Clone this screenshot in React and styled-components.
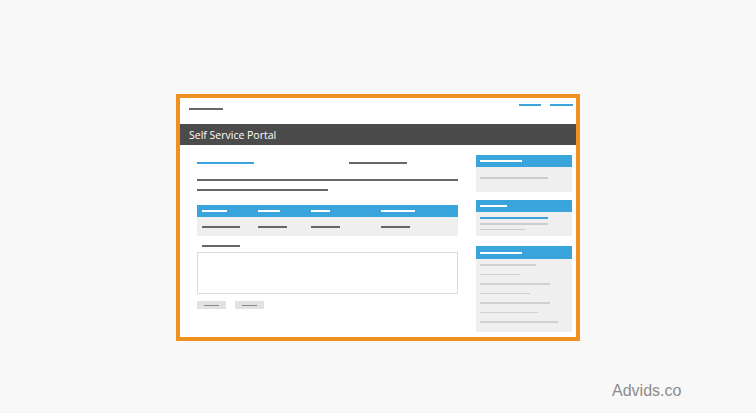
import styled, { createGlobalStyle } from 'styled-components'

const GlobalStyle = createGlobalStyle`
  html, body {
    margin: 0;
    padding: 0;
    background: #f8f8f8;
  }
`;

const BLUE = '#3aa5dc';
const DARK = '#666666';

const Page = styled.div`
  width: 756px;
  height: 413px;
  padding: 94px 0 0 176px;
  box-sizing: border-box;
  display: flex;
  flex-direction: column;
`;

// the orange outlined browser frame
const Frame = styled.div`
  width: 404px;
  height: 247px;
  box-sizing: border-box;
  border: 4px solid #f0901e;
  background: #ffffff;
  display: flex;
  flex-direction: column;
`;

const Line = styled.div`
  width: ${p => p.$w}px;
  height: ${p => p.$h || 2}px;
  background: ${p => p.$c || DARK};
  margin-top: ${p => p.$mt || 0}px;
  flex-shrink: 0;
`;

const TopBar = styled.div`
  height: 26px;
  display: flex;
  justify-content: space-between;
  padding: 0 3px 0 9px;
`;

const Brand = styled.div`
  padding-top: 10px;
`;

const NavLinks = styled.div`
  display: flex;
  gap: 9px;
  padding-top: 6px;
`;

const TitleBar = styled.div`
  height: 21px;
  background: #4b4b4b;
  color: #ffffff;
  font-family: "Open Sans", "Liberation Sans", sans-serif;
  font-size: 10.5px;
  display: flex;
  align-items: center;
  padding-left: 9px;
`;

const Content = styled.div`
  flex: 1;
  display: flex;
  padding: 0 4px 0 17px;
`;

const Main = styled.div`
  width: 261px;
  padding-top: 17px;
  display: flex;
  flex-direction: column;
`;

const HeadRow = styled.div`
  display: flex;
  gap: 95px;
`;

const Table = styled.div`
  margin-top: 14px;
  display: flex;
  flex-direction: column;
`;

const TableRow = styled.div`
  height: ${p => p.$h}px;
  background: ${p => p.$bg};
  display: grid;
  grid-template-columns: 56px 53px 70px 1fr;
  align-items: center;
  padding-left: 5px;
`;

const TextArea = styled.div`
  margin-top: 5px;
  height: 42px;
  box-sizing: border-box;
  border: 1.5px solid #dcdcdc;
`;

const Buttons = styled.div`
  display: flex;
  gap: 9px;
  margin-top: 7px;
`;

const Button = styled.div`
  width: 29px;
  height: 8px;
  background: #e2e2e2;
  display: flex;
  align-items: center;
  justify-content: center;
`;

const Sidebar = styled.div`
  margin-left: 18px;
  width: 96px;
  padding-top: 10px;
  display: flex;
  flex-direction: column;
`;

const Card = styled.div`
  margin-top: ${p => p.$mt || 0}px;
  display: flex;
  flex-direction: column;
`;

const CardHead = styled.div`
  height: ${p => p.$h || 12}px;
  background: ${BLUE};
  display: flex;
  align-items: center;
  padding-left: 4px;
`;

const CardBody = styled.div`
  height: ${p => p.$h}px;
  background: #efefef;
  padding: ${p => p.$pt}px 0 0 4px;
  box-sizing: border-box;
  display: flex;
  flex-direction: column;
`;

const Footer = styled.div`
  margin-top: 41px;
  padding-left: 436px;
  font-family: "Liberation Sans", Arial, sans-serif;
  font-size: 16px;
  color: #8c8c8c;
`;

const headCols = [25, 22, 19, 34];
const rowCols = [38, 29, 29, 29];
const card3Lines = [56, 40, 70, 50, 70, 58, 78];

export default function App() {
  return (
    <>
      <GlobalStyle />
      <Page>
        <Frame>
          <TopBar>
            <Brand><Line $w={34} /></Brand>
            <NavLinks>
              <Line $w={22} $c={BLUE} />
              <Line $w={23} $c={BLUE} />
            </NavLinks>
          </TopBar>
          <TitleBar>Self Service Portal</TitleBar>
          <Content>
            <Main>
              <HeadRow>
                <Line $w={57} $c={BLUE} />
                <Line $w={58} />
              </HeadRow>
              <Line $w={261} $mt={15} />
              <Line $w={131} $mt={8} />
              <Table>
                <TableRow $h={12} $bg={BLUE}>
                  {headCols.map((w, i) => <Line key={i} $w={w} $c="#ffffff" />)}
                </TableRow>
                <TableRow $h={19} $bg="#efefef">
                  {rowCols.map((w, i) => <Line key={i} $w={w} />)}
                </TableRow>
              </Table>
              <Line $w={38} $mt={9} style={{ marginLeft: 5 }} />
              <TextArea />
              <Buttons>
                <Button><Line $w={15} $h={1} $c="#888" /></Button>
                <Button><Line $w={15} $h={1} $c="#888" /></Button>
              </Buttons>
            </Main>
            <Sidebar>
              <Card>
                <CardHead><Line $w={42} $c="#ffffff" /></CardHead>
                <CardBody $h={25} $pt={10}>
                  <Line $w={68} $h={1.5} $c="#cccccc" />
                </CardBody>
              </Card>
              <Card $mt={8}>
                <CardHead><Line $w={27} $c="#ffffff" /></CardHead>
                <CardBody $h={24} $pt={5}>
                  <Line $w={68} $c={BLUE} />
                  <Line $w={68} $h={1.5} $c="#cccccc" $mt={4} />
                  <Line $w={45} $h={1.5} $c="#cccccc" $mt={4} />
                </CardBody>
              </Card>
              <Card $mt={10}>
                <CardHead $h={13}><Line $w={42} $c="#ffffff" /></CardHead>
                <CardBody $h={73} $pt={5}>
                  {card3Lines.map((w, i) => (
                    <Line key={i} $w={w} $h={1.5} $c="#d0d0d0" $mt={i ? 8 : 0} />
                  ))}
                </CardBody>
              </Card>
            </Sidebar>
          </Content>
        </Frame>
        <Footer>Advids.co</Footer>
      </Page>
    </>
  );
}
